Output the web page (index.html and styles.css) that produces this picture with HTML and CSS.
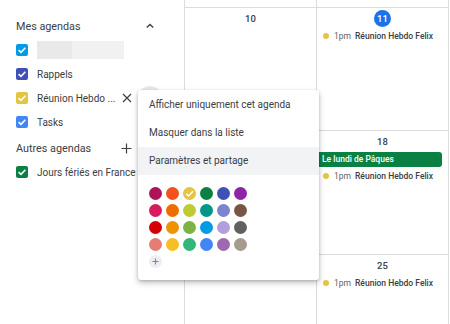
FILE: index.html
```html
<!DOCTYPE html>
<html lang="fr">
<head>
<meta charset="utf-8">
<title>Agenda</title>
<link rel="stylesheet" href="styles.css">
</head>
<body>
<div class="app">
  <aside class="sidebar">
    <div class="section-head">
      <span>Mes agendas</span>
      <svg class="chev" width="10" height="10" viewBox="0 0 10 10"><path d="M1.8 6.6 5 3.4l3.2 3.2" fill="none" stroke="#3c4043" stroke-width="1.4"/></svg>
    </div>
    <div class="cal-row">
      <span class="cb c-peacock"><svg viewBox="0 0 12 12"><path d="M2.6 6.2 5 8.4 9.4 3.8" fill="none" stroke="#fff" stroke-width="1.6"/></svg></span>
      <span class="placeholder"></span>
    </div>
    <div class="cal-row">
      <span class="cb c-blueberry"><svg viewBox="0 0 12 12"><path d="M2.6 6.2 5 8.4 9.4 3.8" fill="none" stroke="#fff" stroke-width="1.6"/></svg></span>
      <span class="label">Rappels</span>
    </div>
    <div class="cal-row">
      <span class="cb c-citron"><svg viewBox="0 0 12 12"><path d="M2.6 6.2 5 8.4 9.4 3.8" fill="none" stroke="#fff" stroke-width="1.6"/></svg></span>
      <span class="label">Réunion Hebdo ...</span>
      <svg class="close" width="10" height="10" viewBox="0 0 10 10"><path d="M1 1l8 8M9 1 1 9" stroke="#3c4043" stroke-width="1.2"/></svg>
      <span class="hover-dot"></span>
    </div>
    <div class="cal-row">
      <span class="cb c-cobalt"><svg viewBox="0 0 12 12"><path d="M2.6 6.2 5 8.4 9.4 3.8" fill="none" stroke="#fff" stroke-width="1.6"/></svg></span>
      <span class="label">Tasks</span>
    </div>
    <div class="section-head other">
      <span>Autres agendas</span>
      <svg class="plus" width="11" height="11" viewBox="0 0 11 11"><path d="M5.5 0.5v10M0.5 5.5h10" stroke="#3c4043" stroke-width="1.2"/></svg>
    </div>
    <div class="cal-row">
      <span class="cb c-basil"><svg viewBox="0 0 12 12"><path d="M2.6 6.2 5 8.4 9.4 3.8" fill="none" stroke="#fff" stroke-width="1.6"/></svg></span>
      <span class="label">Jours fériés en France</span>
    </div>
  </aside>

  <main class="month">
    <div class="day"></div>
    <div class="day"></div>

    <div class="day">
      <div class="num">10</div>
    </div>
    <div class="day">
      <div class="num"><span class="today">11</span></div>
      <div class="event"><span class="dot"></span><span class="time">1pm</span><span class="title">Réunion Hebdo Felix</span></div>
    </div>

    <div class="day"></div>
    <div class="day">
      <div class="num">18</div>
      <div class="allday">Le lundi de Pâques</div>
      <div class="event"><span class="dot"></span><span class="time">1pm</span><span class="title">Réunion Hebdo Felix</span></div>
    </div>

    <div class="day"></div>
    <div class="day">
      <div class="num">25</div>
      <div class="event"><span class="dot"></span><span class="time">1pm</span><span class="title">Réunion Hebdo Felix</span></div>
    </div>
  </main>
</div>

<div class="menu">
  <div class="item">Afficher uniquement cet agenda</div>
  <div class="item">Masquer dans la liste</div>
  <div class="item active">Paramètres et partage</div>
  <div class="palette">
    <span class="sw" style="background:#ad1457"></span>
    <span class="sw" style="background:#f4511e"></span>
    <span class="sw sel" style="background:#e4c441"><svg viewBox="0 0 12 12"><path d="M3 6.3 5.1 8.3 9.2 4" fill="none" stroke="#fff" stroke-width="1.4"/></svg></span>
    <span class="sw" style="background:#0b8043"></span>
    <span class="sw" style="background:#3f51b5"></span>
    <span class="sw" style="background:#8e24aa"></span>
    <span class="sw" style="background:#d81b60"></span>
    <span class="sw" style="background:#ef6c00"></span>
    <span class="sw" style="background:#c0ca33"></span>
    <span class="sw" style="background:#009688"></span>
    <span class="sw" style="background:#7986cb"></span>
    <span class="sw" style="background:#795548"></span>
    <span class="sw" style="background:#d50000"></span>
    <span class="sw" style="background:#f09300"></span>
    <span class="sw" style="background:#7cb342"></span>
    <span class="sw" style="background:#039be5"></span>
    <span class="sw" style="background:#b39ddb"></span>
    <span class="sw" style="background:#616161"></span>
    <span class="sw" style="background:#e67c73"></span>
    <span class="sw" style="background:#f6bf26"></span>
    <span class="sw" style="background:#33b679"></span>
    <span class="sw" style="background:#4285f4"></span>
    <span class="sw" style="background:#9e69af"></span>
    <span class="sw" style="background:#a79b8e"></span>
    <span class="sw add"><svg viewBox="0 0 12 12"><path d="M6 3.2v5.6M3.2 6h5.6" stroke="#80868b" stroke-width="1"/></svg></span>
  </div>
</div>
</body>
</html>
```

FILE: styles.css
```css
* { box-sizing: border-box; }
html, body { margin: 0; padding: 0; }
body {
  width: 450px;
  height: 324px;
  overflow: hidden;
  background: #fff;
  font-family: Roboto, "Liberation Sans", Arial, sans-serif;
  color: #3c4043;
  position: relative;
}
.app {
  display: flex;
  height: 324px;
}
.sidebar {
  width: 184px;
  flex: none;
  padding: 14px 0 0 16px;
}
.section-head {
  display: flex;
  align-items: center;
  height: 24px;
  font-size: 10.8px;
  color: #3c4043;
}
.section-head .chev { margin-left: auto; margin-right: 29px; }
.section-head.other { margin-top: 2px; }
.section-head .plus { margin-left: auto; margin-right: 52px; }
.cal-row {
  display: flex;
  align-items: center;
  height: 24px;
  font-size: 10px;
}
.cb {
  width: 12px;
  height: 12px;
  border-radius: 2px;
  flex: none;
  display: flex;
}
.cb svg { width: 12px; height: 12px; }
.c-peacock { background: #039be5; }
.c-blueberry { background: #3f51b5; }
.c-citron { background: #e4c441; }
.c-cobalt { background: #4285f4; }
.c-basil { background: #0b8043; }
.label { margin-left: 9px; white-space: nowrap; }
.placeholder {
  margin-left: 9px;
  width: 87px;
  height: 18px;
  background: linear-gradient(90deg, #e9e9e9 0, #e9e9e9 35px, #f1f1f1 35px);
}
.close { margin-left: 7px; flex: none; }
.hover-dot {
  width: 24px;
  height: 24px;
  border-radius: 50%;
  background: #e8e8e8;
  margin-left: 6px;
  flex: none;
}

.month {
  display: grid;
  grid-template-columns: 132px 132px;
  grid-template-rows: 8px 123px 124px 1fr;
  border-left: 1px solid #dadce0;
  height: 324px;
}
.day {
  border-right: 1px solid #dadce0;
  border-bottom: 1px solid #dadce0;
  padding-top: 2px;
  overflow: hidden;
}
.month .day:nth-last-child(-n+2) { border-bottom: none; }
.num {
  display: flex;
  justify-content: center;
  align-items: center;
  height: 17px;
  font-size: 9.5px;
  font-weight: 500;
  color: #3c4043;
}
.today {
  width: 17px;
  height: 17px;
  border-radius: 50%;
  background: #1a73e8;
  color: #fff;
  display: flex;
  align-items: center;
  justify-content: center;
}
.event {
  display: flex;
  align-items: center;
  height: 14px;
  margin-top: 2px;
  padding-left: 6px;
  font-size: 8.5px;
  white-space: nowrap;
}
.dot {
  width: 6px;
  height: 6px;
  border-radius: 50%;
  background: #e4c441;
  margin-right: 5px;
  flex: none;
}
.time { color: #5f6368; margin-right: 4px; }
.title { font-weight: 500; color: #3c4043; }
.allday {
  margin: 2px 6px 2px 2px;
  height: 15px;
  background: #0b8043;
  color: #fff;
  font-size: 8.5px;
  font-weight: 500;
  line-height: 15px;
  padding-left: 3px;
  border-radius: 0 3px 3px 0;
  white-space: nowrap;
}

.menu {
  position: absolute;
  left: 138px;
  top: 90px;
  width: 181px;
  height: 190px;
  background: #fff;
  border-radius: 3px;
  box-shadow: 0 3px 6px rgba(0,0,0,0.22), 0 1px 3px rgba(0,0,0,0.18);
  padding-top: 1px;
}
.item {
  height: 28px;
  line-height: 28px;
  padding-left: 11px;
  font-size: 10px;
  color: #3c4043;
  white-space: nowrap;
}
.item.active { background: #f1f3f4; }
.palette {
  display: grid;
  grid-template-columns: repeat(6, 13px);
  grid-auto-rows: 13px;
  gap: 4px;
  margin: 12px 0 0 11px;
}
.sw {
  width: 13px;
  height: 13px;
  border-radius: 50%;
  display: flex;
}
.sw svg { width: 13px; height: 13px; }
.sw.add { background: #eceef1; }
```
